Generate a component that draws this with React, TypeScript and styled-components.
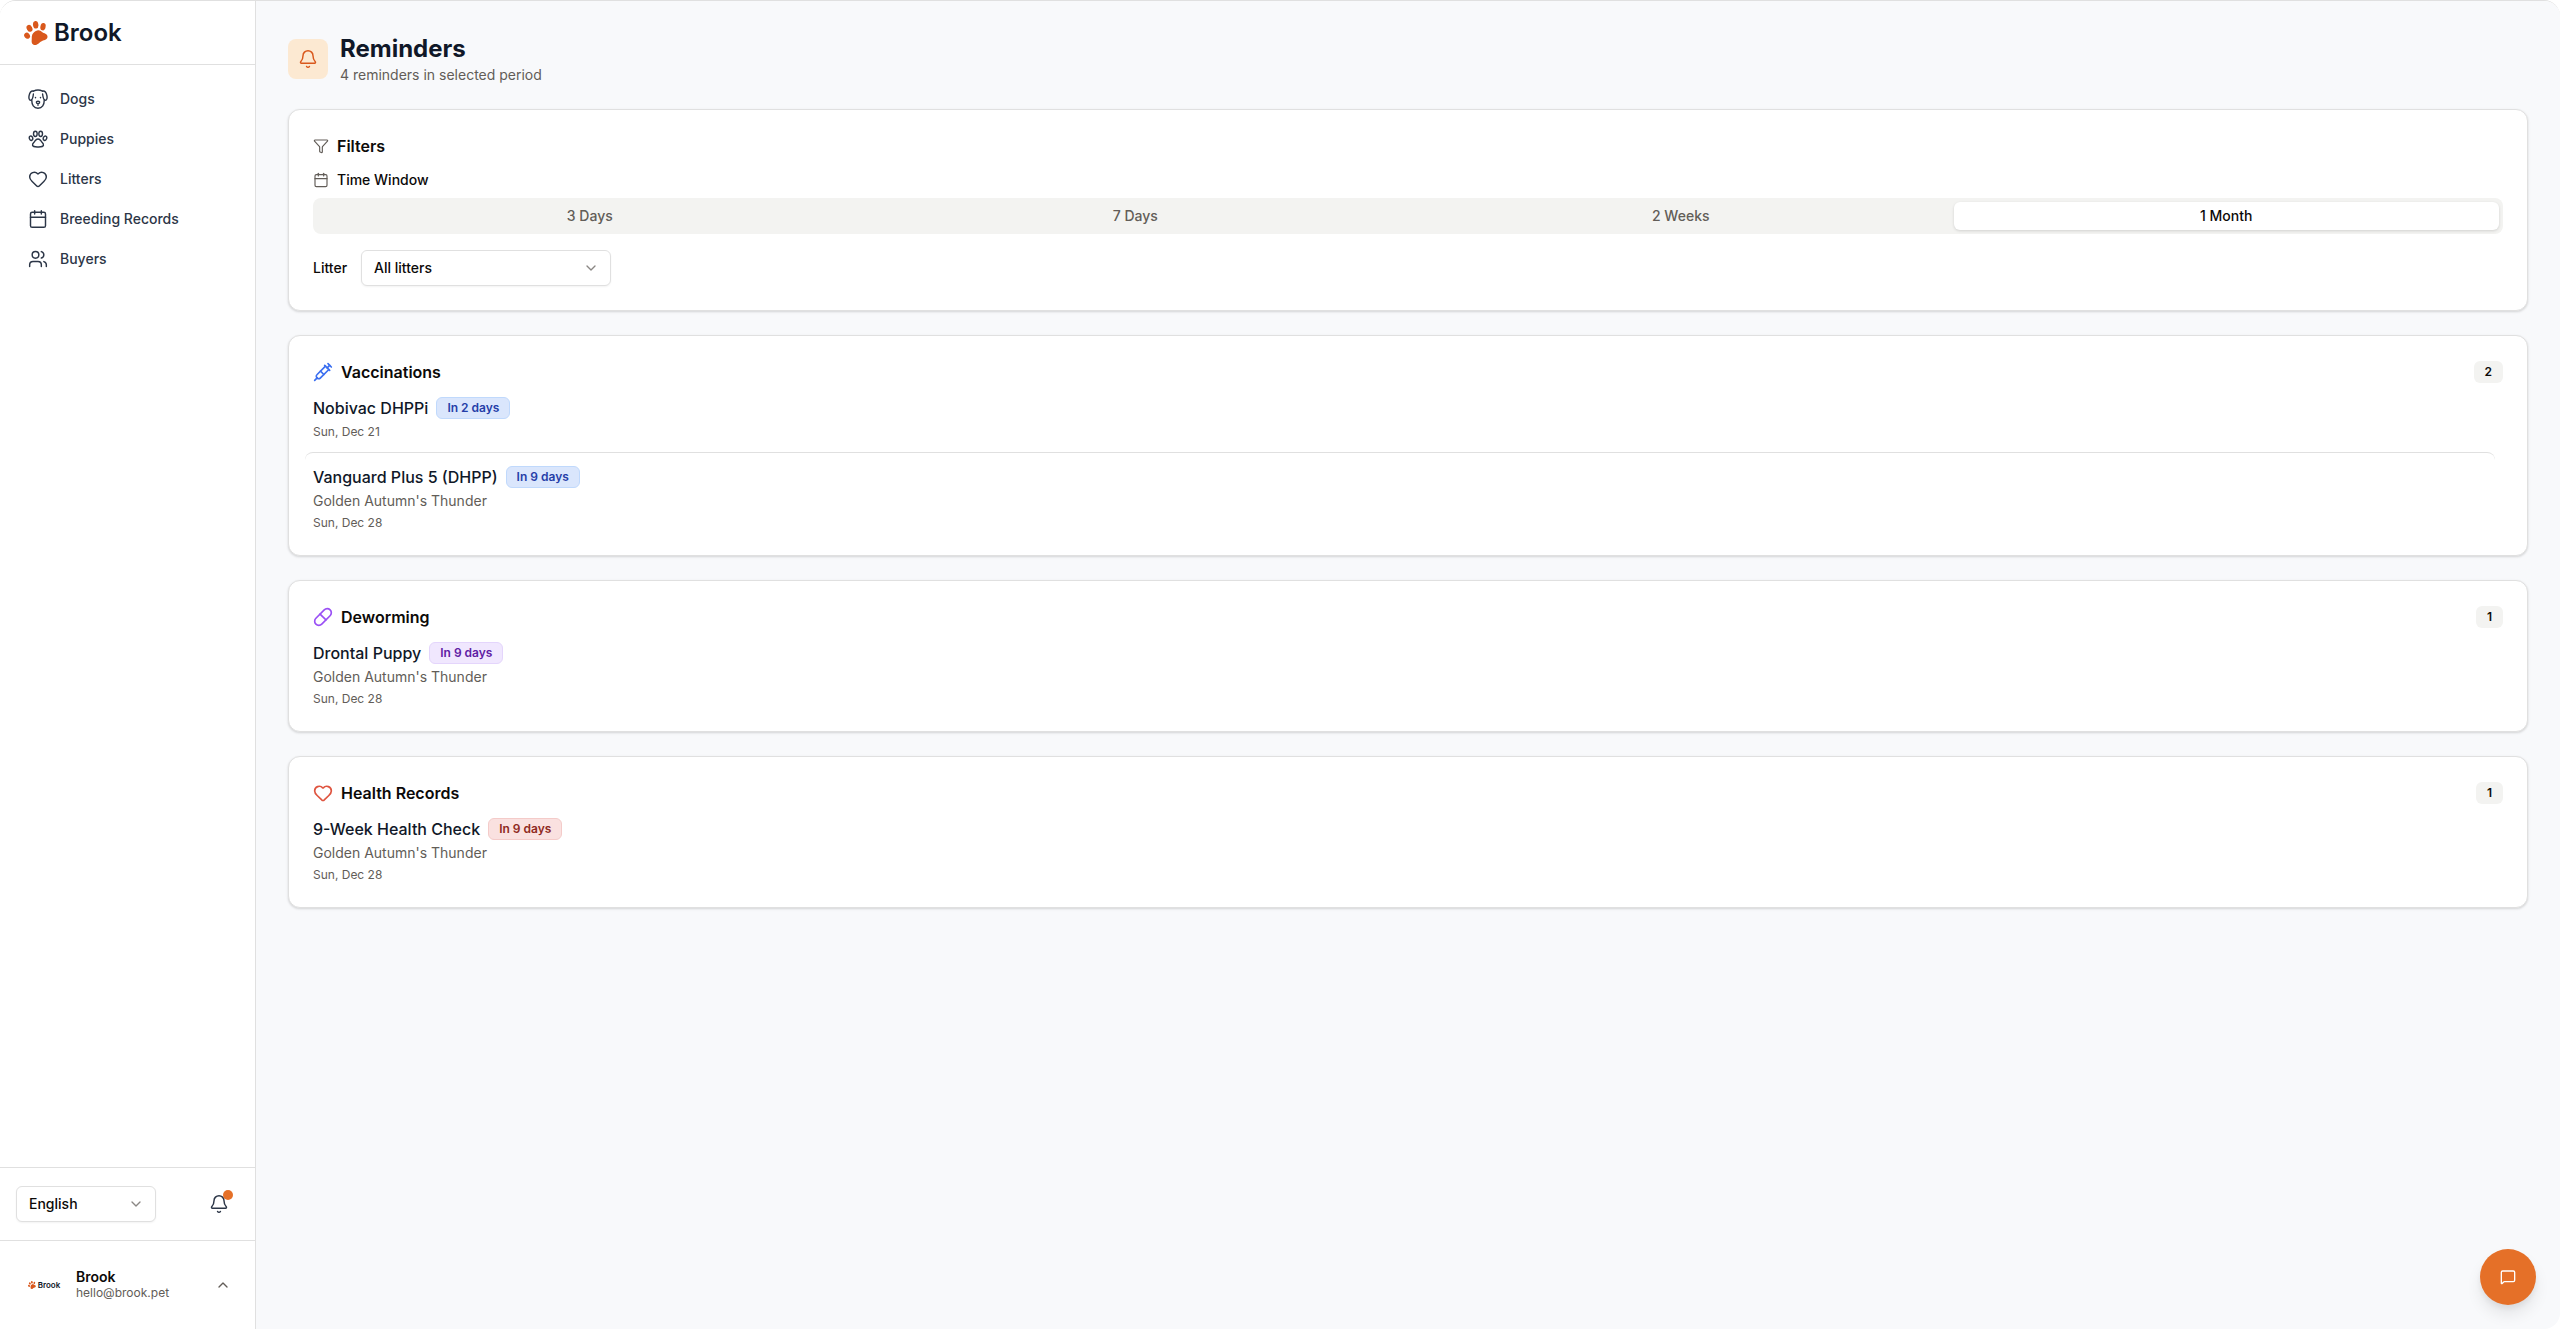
import React, { useState } from "react";
import styled, { createGlobalStyle } from "styled-components";
import {
  Bell,
  Calendar,
  ChevronDown,
  ChevronUp,
  Funnel,
  Heart,
  MessageSquare,
  Pill,
  Syringe,
  Users,
} from "lucide-react";

const color = {
  ink: "#0c0a09",
  heading: "#101828",
  nav: "#2c3647",
  muted: "#625d58",
  line: "#e0e0e0",
  page: "#f8f9fb",
  track: "#f3f3f1",
  brand: "#d9581c",
  accent: "#e57028",
};

const Global = createGlobalStyle`
  *, *::before, *::after { box-sizing: border-box; }
  body {
    margin: 0;
    background: #fff;
    color: ${color.ink};
    font-family: Inter, "Liberation Sans", sans-serif;
    font-size: 14px;
    line-height: 20px;
    -webkit-font-smoothing: antialiased;
  }
  h1, h2, h3, p, ul, fieldset { margin: 0; padding: 0; border: 0; }
  ul { list-style: none; }
  button, select { font: inherit; color: inherit; }
  svg { flex-shrink: 0; }
`;

const Shell = styled.div`
  display: flex;
  min-height: 100vh;
  border-top: 1px solid ${color.line};
  border-radius: 16px;
  overflow: hidden;
`;

const Sidebar = styled.aside`
  display: flex;
  flex-direction: column;
  flex-shrink: 0;
  width: 256px;
  background: #fff;
  border-right: 1px solid ${color.line};
`;

const Brand = styled.a`
  display: flex;
  align-items: center;
  gap: 6px;
  height: 64px;
  padding: 0 24px;
  border-bottom: 1px solid ${color.line};
  color: ${color.heading};
  font-size: 24px;
  line-height: 32px;
  font-weight: 600;
  text-decoration: none;
`;

const Nav = styled.nav`
  display: flex;
  flex-direction: column;
  flex: 1;
  gap: 4px;
  padding: 16px;
`;

const NavLink = styled.a`
  display: flex;
  align-items: center;
  gap: 12px;
  height: 36px;
  padding: 0 12px;
  color: ${color.nav};
  font-weight: 500;
  text-decoration: none;
`;

const Tools = styled.div`
  display: flex;
  align-items: center;
  justify-content: space-between;
  padding: 16px;
  border-top: 1px solid ${color.line};
`;

const SelectBox = styled.div<{ $width: number }>`
  display: grid;
  align-items: center;
  width: ${(p) => p.$width}px;

  select, svg { grid-area: 1 / 1; }
  svg { justify-self: end; margin-right: 12px; color: #8a8784; pointer-events: none; }
`;

const Select = styled.select`
  appearance: none;
  width: 100%;
  height: 36px;
  padding: 0 36px 0 12px;
  border: 1px solid ${color.line};
  border-radius: 6px;
  background: #fff;
  box-shadow: 0 1px 2px rgba(0, 0, 0, 0.05);
  font-weight: 500;
`;

const BellButton = styled.button`
  position: relative;
  display: grid;
  place-items: center;
  width: 40px;
  height: 40px;
  padding: 0;
  border: 0;
  background: none;
  color: ${color.nav};
`;

const Dot = styled.span`
  position: absolute;
  top: 6px;
  right: 6px;
  width: 10px;
  height: 10px;
  border-radius: 50%;
  background: ${color.accent};
`;

const Account = styled.div`
  padding: 16px;
  border-top: 1px solid ${color.line};
`;

const AccountButton = styled.button`
  display: flex;
  align-items: center;
  gap: 16px;
  width: 100%;
  height: 56px;
  padding: 0 8px 0 12px;
  border: 0;
  background: none;
  text-align: left;
`;

const Avatar = styled.span`
  display: flex;
  align-items: center;
  justify-content: center;
  gap: 2px;
  width: 32px;
  color: ${color.heading};
  font-size: 8px;
  line-height: 8px;
  font-weight: 600;
`;

const Person = styled.span`
  flex: 1;
  display: flex;
  flex-direction: column;
  line-height: 16px;
`;

const PersonName = styled.span`
  font-weight: 600;
`;

const Email = styled.span`
  color: ${color.muted};
  font-size: 12px;
`;

const Main = styled.main`
  flex: 1;
  display: flex;
  flex-direction: column;
  gap: 24px;
  padding: 32px;
  background: ${color.page};
`;

const PageHeader = styled.header`
  display: flex;
  align-items: center;
  gap: 12px;
`;

const HeaderIcon = styled.span`
  display: grid;
  place-items: center;
  width: 40px;
  height: 40px;
  border-radius: 8px;
  background: #fce9d2;
  color: ${color.brand};
`;

const Title = styled.h1`
  color: ${color.heading};
  font-size: 24px;
  line-height: 32px;
  font-weight: 700;
`;

const Muted = styled.p`
  color: ${color.muted};
`;

const Card = styled.section`
  display: flex;
  flex-direction: column;
  gap: 12px;
  padding: 24px;
  border: 1px solid ${color.line};
  border-radius: 12px;
  background: #fff;
  box-shadow: 0 1px 3px rgba(0, 0, 0, 0.1), 0 1px 2px rgba(0, 0, 0, 0.06);
`;

const CardHead = styled.div`
  display: flex;
  align-items: center;
  justify-content: space-between;
`;

const CardTitle = styled.h2<{ $tint: string }>`
  display: flex;
  align-items: center;
  gap: 8px;
  font-size: 16px;
  line-height: 24px;
  font-weight: 600;

  svg { color: ${(p) => p.$tint}; }
`;

const Count = styled.span`
  padding: 3px 11px;
  border-radius: 6px;
  background: ${color.track};
  font-size: 12px;
  line-height: 16px;
  font-weight: 600;
`;

const FilterFields = styled.div`
  display: flex;
  flex-direction: column;
  gap: 16px;
`;

const WindowField = styled.div`
  display: flex;
  flex-direction: column;
  gap: 8px;
`;

const FieldLabel = styled.span`
  display: flex;
  align-items: center;
  gap: 8px;
  font-weight: 500;

  svg { color: ${color.muted}; }
`;

const Segments = styled.div`
  display: grid;
  grid-template-columns: repeat(4, 1fr);
  height: 36px;
  padding: 4px;
  border-radius: 8px;
  background: ${color.track};
`;

const Segment = styled.button<{ $active: boolean }>`
  padding: 0;
  border: 0;
  border-radius: 6px;
  background: ${(p) => (p.$active ? "#fff" : "transparent")};
  box-shadow: ${(p) => (p.$active ? "0 1px 3px rgba(0, 0, 0, 0.14)" : "none")};
  color: ${(p) => (p.$active ? color.ink : color.muted)};
  font-weight: 500;
`;

const LitterField = styled.div`
  display: flex;
  align-items: center;
  gap: 12px;
`;

const Label = styled.label`
  min-width: 36px;
  font-weight: 500;
`;

const Item = styled.li`
  margin: 0 8px 0 -8px;
  padding: 0 8px 12px;

  &:last-child { padding-bottom: 0; }
  & + & {
    padding-top: 12px;
    border-top: 1px solid ${color.line};
    border-radius: 8px;
  }
`;

const ItemHead = styled.div`
  display: flex;
  align-items: center;
  gap: 8px;
`;

const ItemName = styled.h3`
  color: ${color.heading};
  font-size: 16px;
  line-height: 24px;
  font-weight: 500;
`;

const tones = {
  blue: { icon: "#3b6ff0", bg: "#dae6fc", border: "#c0d9fc", text: "#263ea8" },
  purple: { icon: "#9a50f5", bg: "#f0e7fe", border: "#e4d5fc", text: "#5f20a4" },
  red: { icon: "#df5540", bg: "#fae1e0", border: "#f4cbc9", text: "#8f2a22" },
};
type Tone = keyof typeof tones;

const Badge = styled.span<{ $tone: Tone }>`
  padding: 2px 10px;
  border: 1px solid ${(p) => tones[p.$tone].border};
  border-radius: 6px;
  background: ${(p) => tones[p.$tone].bg};
  color: ${(p) => tones[p.$tone].text};
  font-size: 12px;
  line-height: 16px;
  font-weight: 600;
`;

const Puppy = styled(Muted)`
  margin-top: 2px;
`;

const When = styled(Muted)`
  margin-top: 4px;
  font-size: 12px;
  line-height: 16px;
`;

const ChatButton = styled.button`
  position: fixed;
  right: 24px;
  bottom: 24px;
  display: grid;
  place-items: center;
  width: 56px;
  height: 56px;
  padding: 0;
  border: 0;
  border-radius: 50%;
  background: ${color.accent};
  box-shadow: 0 10px 15px rgba(0, 0, 0, 0.08), 0 4px 6px rgba(0, 0, 0, 0.06);
  color: #fff;
`;

function PawMark({ size }: { size: number }) {
  return (
    <svg width={size} height={size} viewBox="0 0 24 24" fill={color.brand} aria-hidden="true">
      <ellipse cx="3.1" cy="14.700" rx="2.700" ry="3.200" transform="rotate(-40 3.1 14.7)" />
      <ellipse cx="5.500" cy="7.300" rx="2.700" ry="3.600" transform="rotate(-30 5.5 7.3)" />
      <ellipse cx="11.700" cy="3.800" rx="2.700" ry="3.800" transform="rotate(-8 11.7 3.8)" />
      <ellipse cx="19" cy="5.700" rx="2.600" ry="3.700" transform="rotate(12 19 5.7)" />
      <path d="M13.400 9.400c2-.4 3.400.6 5 1.900 1.500 1.200 4.900 1.400 5.100 4.200.2 2.900-2.900 3.500-5.400 4.400-2.600.9-4.200 4.100-7 4.100-3 0-3.700-2.600-3.400-5 .2-2-.2-3.400.6-5.400.8-2.300 2.900-3.800 5.100-4.200z" />
    </svg>
  );
}

const stroke = {
  width: 20,
  height: 20,
  viewBox: "0 0 24 24",
  fill: "none",
  stroke: "currentColor",
  strokeLinecap: "round" as const,
  strokeLinejoin: "round" as const,
  "aria-hidden": true,
};

function DogIcon() {
  return (
    <svg {...stroke} strokeWidth={1.7}>
      <path d="M6.500 2.500C9.500 1 14.500 1 17.500 2.500M4.600 13c-.4 6 2.400 10 7.400 10s7.800-4 7.400-10" />
      <path d="M6.500 2.500C3.500 2 2 4.500 1.300 8c-.6 3 .2 5.500 1.700 5.500C5.500 13.500 6.200 9 6.500 6" />
      <path d="M17.500 2.500c3-.5 4.500 2 5.200 5.500.6 3-.2 5.500-1.700 5.500-2.500 0-3.200-4.500-3.500-7.500" />
      <path d="M9 10v.6M15 10v.6" />
      <path d="M10 15.500c0-1.300 4-1.300 4 0 0 1-1 2-2 2s-2-1-2-2zM12 17.500V19.500" />
    </svg>
  );
}

function PawIcon() {
  return (
    <svg {...stroke} strokeWidth={1.7}>
      <ellipse cx="8.800" cy="5.800" rx="2.200" ry="3.200" />
      <ellipse cx="15.200" cy="5.800" rx="2.200" ry="3.200" />
      <ellipse cx="3.600" cy="11" rx="2" ry="2.700" transform="rotate(-20 3.600 11)" />
      <ellipse cx="20.400" cy="11" rx="2" ry="2.700" transform="rotate(20 20.400 11)" />
      <path d="M12 12c-2.500 0-3.300 2-4.500 3.500-1.200 1.300-2.500 2.100-2 4 .6 2.200 2.700 2 6.500 2s5.900.2 6.500-2c.5-1.900-.8-2.700-2-4C15.300 14 14.500 12 12 12z" />
    </svg>
  );
}

type Reminder = { name: string; due: string; puppy?: string; date: string };
type Group = { title: string; tone: Tone; icon: React.ReactNode; items: Reminder[] };

const puppy = "Golden Autumn's Thunder";
const groups: Group[] = [
  {
    title: "Vaccinations",
    tone: "blue",
    icon: <Syringe size={20} />,
    items: [
      { name: "Nobivac DHPPi", due: "In 2 days", date: "Sun, Dec 21" },
      { name: "Vanguard Plus 5 (DHPP)", due: "In 9 days", puppy, date: "Sun, Dec 28" },
    ],
  },
  {
    title: "Deworming",
    tone: "purple",
    icon: <Pill size={20} />,
    items: [{ name: "Drontal Puppy", due: "In 9 days", puppy, date: "Sun, Dec 28" }],
  },
  {
    title: "Health Records",
    tone: "red",
    icon: <Heart size={20} />,
    items: [{ name: "9-Week Health Check", due: "In 9 days", puppy, date: "Sun, Dec 28" }],
  },
];

const links = [
  { label: "Dogs", icon: <DogIcon /> },
  { label: "Puppies", icon: <PawIcon /> },
  { label: "Litters", icon: <Heart size={20} strokeWidth={1.75} /> },
  { label: "Breeding Records", icon: <Calendar size={20} strokeWidth={1.75} /> },
  { label: "Buyers", icon: <Users size={20} strokeWidth={1.75} /> },
];

const windows = ["3 Days", "7 Days", "2 Weeks", "1 Month"];

export default function App() {
  const [period, setPeriod] = useState("1 Month");

  return (
    <>
      <Global />
      <Shell>
        <Sidebar>
          <Brand href="#">
            <PawMark size={24} />
            Brook
          </Brand>
          <Nav>
            {links.map((l) => (
              <NavLink href="#" key={l.label}>
                {l.icon}
                {l.label}
              </NavLink>
            ))}
          </Nav>
          <Tools>
            <SelectBox $width={140}>
              <Select aria-label="Language">
                <option>English</option>
              </Select>
              <ChevronDown size={16} />
            </SelectBox>
            <BellButton type="button" aria-label="Notifications">
              <Bell size={20} strokeWidth={1.75} />
              <Dot />
            </BellButton>
          </Tools>
          <Account>
            <AccountButton type="button">
              <Avatar>
                <PawMark size={8} />
                Brook
              </Avatar>
              <Person>
                <PersonName>Brook</PersonName>
                <Email>hello@brook.pet</Email>
              </Person>
              <ChevronUp size={16} color={color.muted} />
            </AccountButton>
          </Account>
        </Sidebar>
        <Main>
          <PageHeader>
            <HeaderIcon>
              <Bell size={20} strokeWidth={1.75} />
            </HeaderIcon>
            <div>
              <Title>Reminders</Title>
              <Muted>4 reminders in selected period</Muted>
            </div>
          </PageHeader>
          <Card>
            <CardTitle $tint={color.muted}>
              <Funnel size={16} strokeWidth={1.75} />
              Filters
            </CardTitle>
            <FilterFields>
              <WindowField>
                <FieldLabel id="time-window">
                  <Calendar size={16} strokeWidth={1.75} />
                  Time Window
                </FieldLabel>
                <Segments role="group" aria-labelledby="time-window">
                  {windows.map((w) => (
                    <Segment
                      key={w}
                      type="button"
                      $active={w === period}
                      aria-pressed={w === period}
                      onClick={() => setPeriod(w)}
                    >
                      {w}
                    </Segment>
                  ))}
                </Segments>
              </WindowField>
              <LitterField>
                <Label htmlFor="litter">Litter</Label>
                <SelectBox $width={250}>
                  <Select id="litter">
                    <option>All litters</option>
                  </Select>
                  <ChevronDown size={16} />
                </SelectBox>
              </LitterField>
            </FilterFields>
          </Card>
          {groups.map((g) => (
            <Card key={g.title}>
              <CardHead>
                <CardTitle $tint={tones[g.tone].icon}>
                  {g.icon}
                  {g.title}
                </CardTitle>
                <Count>{g.items.length}</Count>
              </CardHead>
              <ul>
                {g.items.map((r) => (
                  <Item key={r.name}>
                    <ItemHead>
                      <ItemName>{r.name}</ItemName>
                      <Badge $tone={g.tone}>{r.due}</Badge>
                    </ItemHead>
                    {r.puppy && <Puppy>{r.puppy}</Puppy>}
                    <When>{r.date}</When>
                  </Item>
                ))}
              </ul>
            </Card>
          ))}
        </Main>
      </Shell>
      <ChatButton type="button" aria-label="Open chat">
        <MessageSquare size={16} />
      </ChatButton>
    </>
  );
}
